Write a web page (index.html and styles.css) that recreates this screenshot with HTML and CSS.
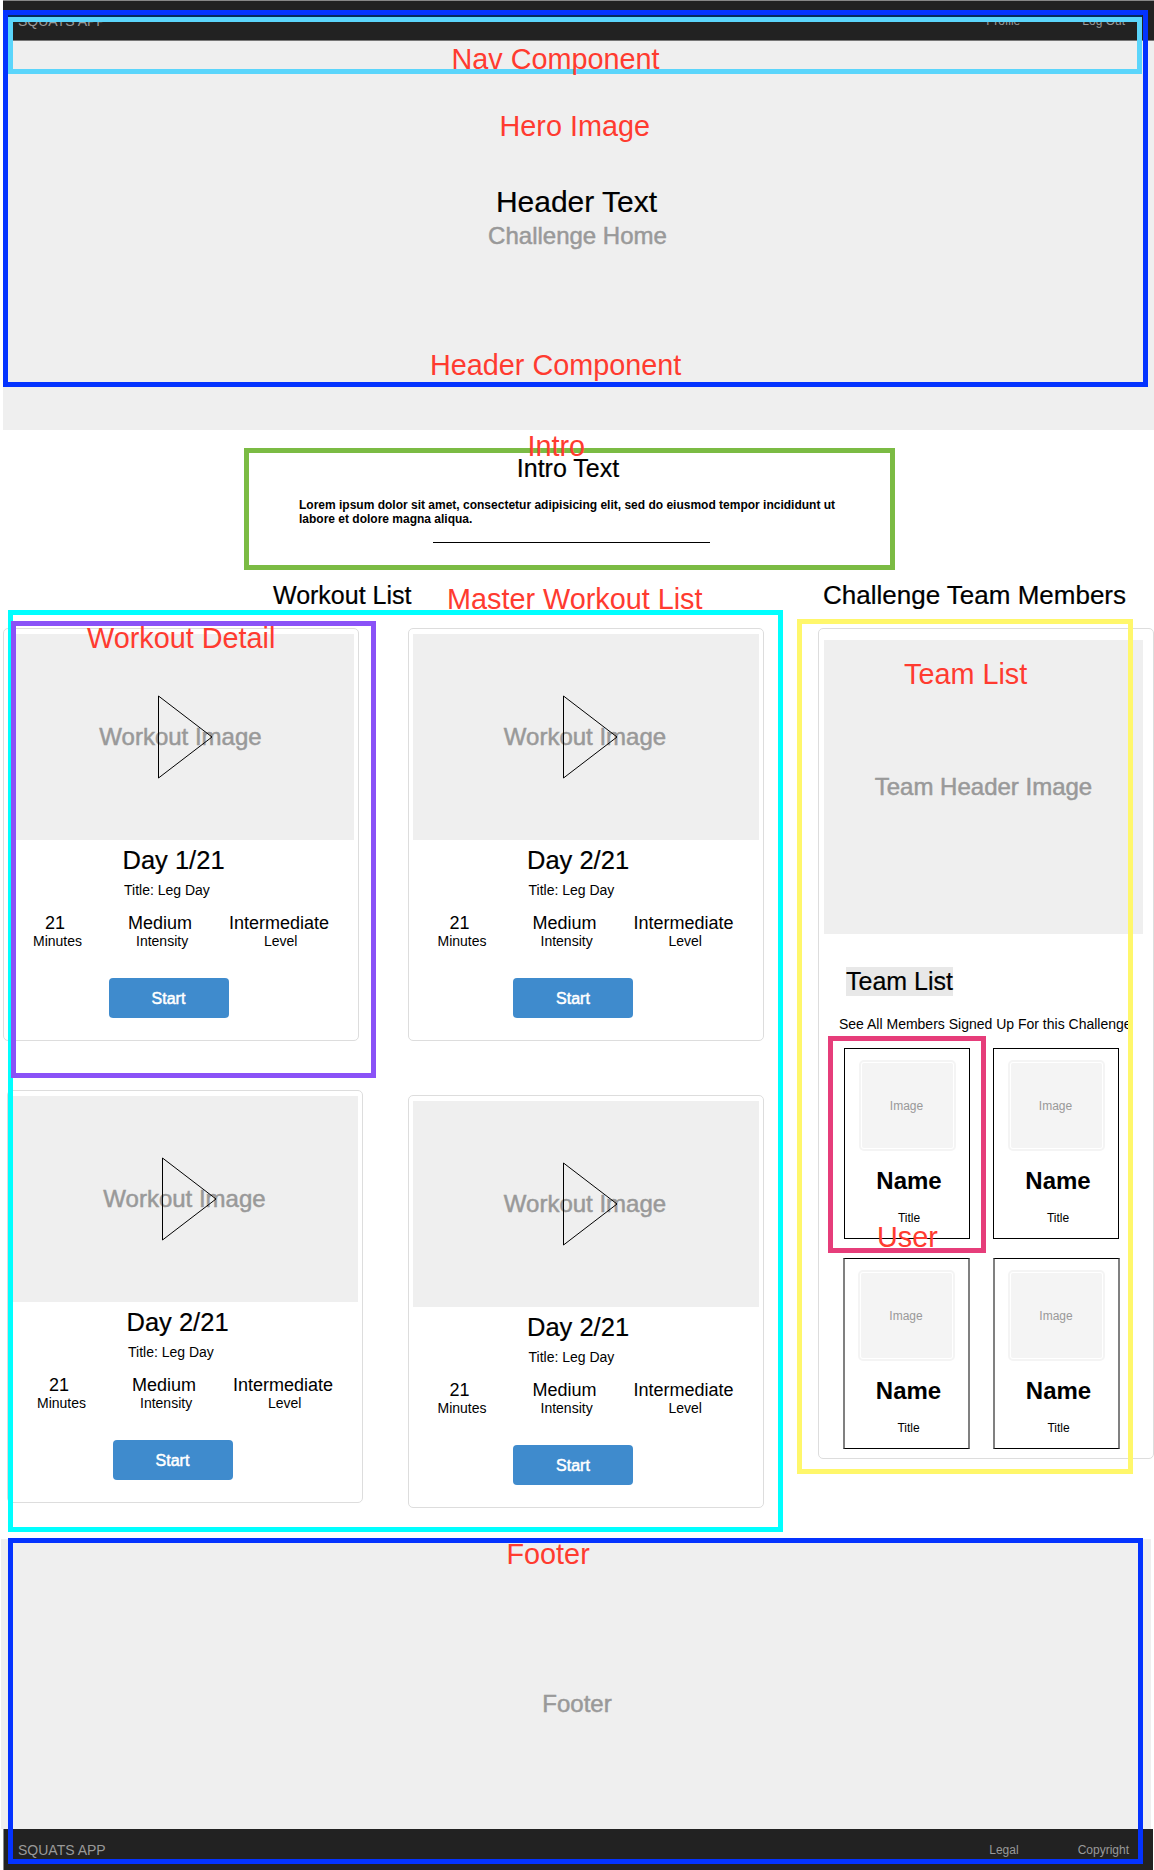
FILE: index.html
```html
<!DOCTYPE html>
<html lang="en">
<head>
<meta charset="utf-8">
<title>Squats App – Challenge Home</title>
<link rel="stylesheet" href="styles.css">
</head>
<body>
<header class="header">
  <nav class="bar">
    <span class="brand">SQUATS APP</span>
    <span class="links"><a>Profile</a><a>Log Out</a></span>
  </nav>
  <div class="hero">
    <h1>Header Text</h1>
    <p class="soft">Challenge Home</p>
  </div>
</header>

<section class="intro">
  <h2>Intro Text</h2>
  <p>Lorem ipsum dolor sit amet, consectetur adipisicing elit, sed do eiusmod tempor incididunt ut<br>labore et dolore magna aliqua.</p>
  <hr>
</section>

<main class="main">
  <section class="workouts">
    <h2>Workout List</h2>
    <div class="columns">
      <div class="column">
        <article class="card">
          <div class="picture soft">Workout Image<svg class="play" width="56" height="84" viewBox="0 0 56 84"><path d="M.5 1v82L54 42z"/></svg></div>
          <h3>Day 1/21</h3>
          <p class="title">Title: Leg Day</p>
          <div class="stats">
            <div class="minutes"><b>21</b><span>Minutes</span></div>
            <div class="intensity"><b>Medium</b><span>Intensity</span></div>
            <div class="level"><b>Intermediate</b><span>Level</span></div>
          </div>
          <a class="start">Start</a>
        </article>
        <article class="card card-nudged">
          <div class="picture soft">Workout Image<svg class="play" width="56" height="84" viewBox="0 0 56 84"><path d="M.5 1v82L54 42z"/></svg></div>
          <h3>Day 2/21</h3>
          <p class="title">Title: Leg Day</p>
          <div class="stats">
            <div class="minutes"><b>21</b><span>Minutes</span></div>
            <div class="intensity"><b>Medium</b><span>Intensity</span></div>
            <div class="level"><b>Intermediate</b><span>Level</span></div>
          </div>
          <a class="start">Start</a>
        </article>
      </div>
      <div class="column column-second">
        <article class="card">
          <div class="picture soft">Workout Image<svg class="play" width="56" height="84" viewBox="0 0 56 84"><path d="M.5 1v82L54 42z"/></svg></div>
          <h3>Day 2/21</h3>
          <p class="title">Title: Leg Day</p>
          <div class="stats">
            <div class="minutes"><b>21</b><span>Minutes</span></div>
            <div class="intensity"><b>Medium</b><span>Intensity</span></div>
            <div class="level"><b>Intermediate</b><span>Level</span></div>
          </div>
          <a class="start">Start</a>
        </article>
        <article class="card">
          <div class="picture soft">Workout Image<svg class="play" width="56" height="84" viewBox="0 0 56 84"><path d="M.5 1v82L54 42z"/></svg></div>
          <h3>Day 2/21</h3>
          <p class="title">Title: Leg Day</p>
          <div class="stats">
            <div class="minutes"><b>21</b><span>Minutes</span></div>
            <div class="intensity"><b>Medium</b><span>Intensity</span></div>
            <div class="level"><b>Intermediate</b><span>Level</span></div>
          </div>
          <a class="start">Start</a>
        </article>
      </div>
    </div>
  </section>

  <section class="team">
    <h2>Challenge Team Members</h2>
    <div class="panel">
      <div class="team-picture soft">Team Header Image</div>
      <h3><mark>Team List</mark></h3>
      <p class="see-all">See All Members Signed Up For this Challenge</p>
      <div class="users">
        <div class="user"><div class="avatar"><span>Image</span></div><h4>Name</h4><p>Title</p></div>
        <div class="user"><div class="avatar"><span>Image</span></div><h4>Name</h4><p>Title</p></div>
        <div class="user user-thick user-left"><div class="avatar"><span>Image</span></div><h4>Name</h4><p>Title</p></div>
        <div class="user user-thick"><div class="avatar"><span>Image</span></div><h4>Name</h4><p>Title</p></div>
      </div>
    </div>
  </section>
</main>

<footer>
  <div class="footer-area soft">Footer</div>
  <div class="bar bar-bottom">
    <span class="brand">SQUATS APP</span>
    <span class="links"><a>Legal</a><a>Copyright</a></span>
  </div>
</footer>

<!-- Component annotations drawn over the wireframe -->
<div class="outline outline-header"></div>
<div class="outline outline-nav"></div>
<div class="outline outline-intro"></div>
<div class="outline outline-master"></div>
<div class="outline outline-detail"></div>
<div class="outline outline-team"></div>
<div class="outline outline-user"></div>
<div class="outline outline-footer"></div>
<span class="label label-nav">Nav Component</span>
<span class="label label-hero">Hero Image</span>
<span class="label label-header">Header Component</span>
<span class="label label-intro">Intro</span>
<span class="label label-master">Master Workout List</span>
<span class="label label-detail">Workout Detail</span>
<span class="label label-team">Team List</span>
<span class="label label-user">User</span>
<span class="label label-footer">Footer</span>
</body>
</html>
```
FILE: styles.css
```css
* { box-sizing: border-box; margin: 0; padding: 0; }
body {
  position: relative;
  width: 1154px;
  height: 1870px;
  overflow: hidden;
  background: #fff;
  color: #000;
  font-family: "Liberation Sans", Arial, Helvetica, sans-serif;
}
h1, h2, h3 { font-weight: 400; white-space: nowrap; -webkit-text-stroke: .2px #000; }
.soft { color: #999; font-size: 24px; -webkit-text-stroke: .5px #999; }

/* Header */
.header { height: 430px; margin-left: 3px; background: #efefef; }
.bar {
  display: flex;
  justify-content: space-between;
  height: 41px;
  padding: 0 29px 0 15px;
  border-top: 1px solid #888;
  border-bottom: 1px solid #777;
  background: #222;
  color: #999;
  line-height: 40px;
}
.brand { font-size: 14px; }
.links { display: flex; gap: 62px; font-size: 12px; }
.hero { padding: 143px 2px 0 0; text-align: center; }
.hero h1 { padding-right: 2px; font-size: 30px; line-height: 36px; }
.hero p { line-height: 32px; }

/* Intro */
.intro { width: 538px; margin-left: 299px; padding-top: 23px; }
.intro h2 { font-size: 25px; line-height: 30px; text-align: center; }
.intro p { margin-top: 15px; font-size: 12px; font-weight: 700; line-height: 14px; white-space: nowrap; }
.intro hr { width: 277px; height: 1px; margin: 16px 0 0 134px; border: 0; background: #000; }

/* Workouts and team */
.main { display: flex; height: 959px; margin: 37px 0 0; }
.workouts { width: 818px; }
.workouts h2 { padding-left: 273px; font-size: 25px; line-height: 30px; }
.columns { display: flex; gap: 48.5px; margin: 18px 0 0 3px; }
.column { display: flex; flex-direction: column; gap: 49px; width: 356px; }
.column-second { gap: 54px; }
.card {
  width: 356px;
  height: 413px;
  padding: 5px 4px;
  border: 1px solid #ddd;
  border-radius: 5px;
}
.card-nudged { margin-left: 4px; }
.picture {
  position: relative;
  height: 206px;
  padding-right: 1px;
  background: #efefef;
  line-height: 206px;
  text-align: center;
}
.play { position: absolute; left: 150px; top: 61px; fill: none; stroke: #000; stroke-width: 1; }
.card h3 { margin: 5px 0 0 114.5px; font-size: 25.5px; line-height: 30px; }
.title { margin: 6px 0 0 116px; font-size: 14px; line-height: 18px; }
.stats { display: grid; grid-template-columns: 95px 101px auto; margin: 14px 0 0 25px; }
.stats b { display: block; font-size: 18px; font-weight: 400; line-height: 20px; }
.stats span { display: block; font-size: 14px; line-height: 17px; }
.minutes b { padding-left: 12px; }
.intensity span { padding-left: 8px; }
.level span { padding-left: 35px; }
.start {
  display: block;
  width: 120px;
  height: 40px;
  margin: 28px 0 0 100.5px;
  border-radius: 4px;
  background: #3f8bcd;
  color: #fff;
  font-size: 16px;
  line-height: 42px;
  text-align: center;
  -webkit-text-stroke: .5px #fff;
}

.team { width: 336px; }
.team h2 { padding-left: 5px; font-size: 26px; line-height: 31px; }
.panel {
  height: 831px;
  margin-top: 17px;
  padding: 11px 10px 0 5px;
  border: 1px solid #ddd;
  border-radius: 5px;
}
.team-picture { height: 294px; background: #efefef; line-height: 294px; text-align: center; }
.panel h3 { display: flex; margin: 33px 0 0 22px; font-size: 25px; line-height: 29px; }
.panel mark { background: #e8e8e8; color: #000; }
.see-all { margin: 19px 0 0 15px; font-size: 14px; line-height: 18px; white-space: nowrap; }
.users {
  display: grid;
  grid-template-columns: 126px 126px;
  grid-auto-rows: 191px;
  gap: 19px 23px;
  margin: 15px 0 0 20px;
}
.user { padding-top: 11px; border: 1px solid #000; text-align: center; }
.user-thick { width: 127px; border-left: 2px solid #808080; border-right: 2px solid #808080; }
.user-left { margin-left: -1px; }
.avatar {
  width: 97px;
  height: 91px;
  margin: 0 auto;
  padding: 1px;
  border: 2px solid #f4f4f4;
  border-radius: 5px;
}
.avatar span {
  display: block;
  height: 85px;
  padding-right: 1px;
  border-radius: 2px;
  background: #f4f4f4;
  color: #999;
  font-size: 12px;
  line-height: 87px;
}
.user h4 { margin-top: 15px; padding-left: 4px; font-size: 24px; line-height: 30px; }
.user p { margin-top: 14px; padding-left: 4px; font-size: 12px; line-height: 16px; }

/* Footer */
.footer-area { width: 1150px; height: 290px; margin-left: 1px; padding-left: 2px; background: #efefef; line-height: 330px; text-align: center; }
.bar-bottom { width: 1150px; margin-left: 3px; padding: 0 24px 0 14px; border: 0; border-left: 1px solid #888; line-height: 42px; }
.bar-bottom .links { gap: 59px; }

/* Annotations */
.outline { position: absolute; border: 5px solid; }
.outline-header { left: 3px; top: 10px; width: 1145px; height: 377px; color: #0433ff; }
.outline-nav { left: 8px; top: 17px; width: 1134px; height: 57px; color: #5bd5fb; box-shadow: 0 -2px 0 #042a5c; }
.outline-intro { left: 244px; top: 448px; width: 651px; height: 122px; color: #7bbb44; }
.outline-master { left: 8px; top: 610px; width: 775px; height: 922px; color: #00ffff; }
.outline-detail { left: 11px; top: 621px; width: 365px; height: 457px; color: #8a52f7; }
.outline-team { left: 797px; top: 619px; width: 336px; height: 855px; color: #fff76b; }
.outline-user { left: 828px; top: 1036px; width: 158px; height: 217px; color: #e63d7a; }
.outline-footer { left: 8px; top: 1538px; width: 1135px; height: 326px; color: #0433ff; }
.label { position: absolute; color: #ff3b30; font-size: 28.8px; line-height: 34px; white-space: nowrap; }
.label-nav { left: 451.5px; top: 42px; }
.label-hero { left: 499.5px; top: 109px; }
.label-header { left: 430px; top: 348px; }
.label-intro { left: 527.5px; top: 429px; }
.label-master { left: 447px; top: 582px; }
.label-detail { left: 87px; top: 621px; }
.label-team { left: 904px; top: 657px; }
.label-user { left: 877px; top: 1220px; }
.label-footer { left: 506.5px; top: 1537px; }
```
